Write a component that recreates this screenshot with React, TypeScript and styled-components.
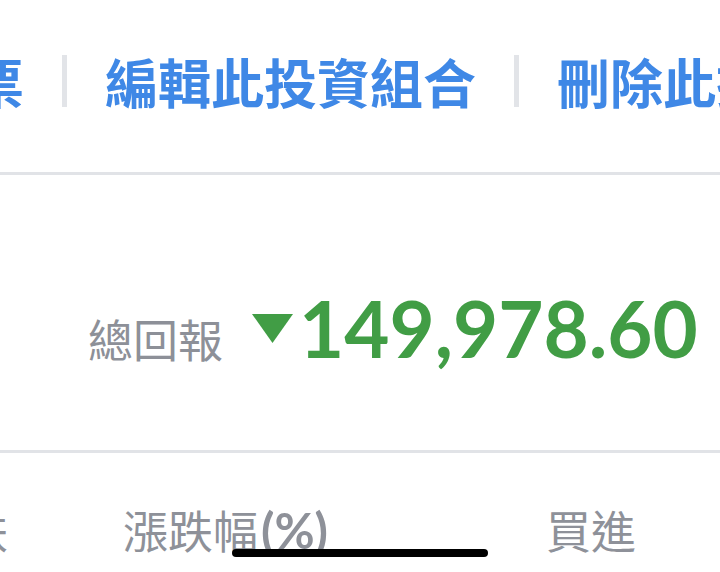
import React from "react";
import styled, { createGlobalStyle } from "styled-components";

const GlobalStyle = createGlobalStyle`
  html, body {
    margin: 0;
    padding: 0;
    background: #ffffff;
  }
  body {
    font-family: "Noto Sans CJK TC", "Noto Sans", sans-serif;
  }
`;

const Screen = styled.div`
  position: relative;
  width: 720px;
  height: 572px;
  overflow: hidden;
  background: #ffffff;
`;

const ActionBar = styled.div`
  box-sizing: border-box;
  height: 172px;
  padding-bottom: 10px;
  display: flex;
  align-items: center;
  gap: 38px;
  margin-left: -188px;
  white-space: nowrap;
`;

const ActionLink = styled.span`
  flex: none;
  font-family: "Noto Sans CJK TC", sans-serif;
  font-weight: 700;
  font-size: 53px;
  line-height: 53px;
  color: #3f88e6;
`;

const ActionSeparator = styled.span`
  flex: none;
  width: 5px;
  height: 52px;
  background: #e2e4e8;
`;

const Divider = styled.div`
  height: 3px;
  background: #e1e3e7;
`;

const Summary = styled.div`
  box-sizing: border-box;
  height: 275px;
  padding: 114px 0 0 88px;
  display: flex;
  align-items: baseline;
  white-space: nowrap;
`;

const SummaryLabel = styled.span`
  font-family: "Noto Sans CJK TC", sans-serif;
  font-weight: 400;
  font-size: 45px;
  line-height: 45px;
  color: #8d9098;
  margin-right: 29px;
`;

const Marker = styled.span`
  display: inline-block;
  width: 41px;
  height: 29px;
  padding-bottom: 15px;
  margin-right: 6px;
  svg {
    display: block;
  }
`;

const Amount = styled.span`
  font-family: Lato, "Liberation Sans", sans-serif;
  font-weight: 700;
  font-size: 78px;
  line-height: 78px;
  color: #419d45;
`;

const HeaderRow = styled.div`
  box-sizing: border-box;
  padding-top: 54px;
  margin-left: -82px;
  display: grid;
  grid-template-columns: 205px 423px 200px;
  white-space: nowrap;
`;

const HeaderCell = styled.span`
  font-family: "Noto Sans CJK TC", sans-serif;
  font-weight: 400;
  font-size: 45px;
  line-height: 45px;
  color: #8e9199;
`;

const Unit = styled.span`
  font-family: Lato, "Liberation Sans", sans-serif;
  font-weight: 700;
  font-size: 49px;
  margin-left: 3px;
`;

const HomeIndicator = styled.div`
  position: absolute;
  left: 232px;
  bottom: 15px;
  width: 256px;
  height: 8px;
  border-radius: 4px;
  background: #000000;
`;

export default function App() {
  return (
    <>
      <GlobalStyle />
      <Screen>
        <ActionBar>
          <ActionLink>新增股票</ActionLink>
          <ActionSeparator />
          <ActionLink>編輯此投資組合</ActionLink>
          <ActionSeparator />
          <ActionLink>刪除此投資組合</ActionLink>
        </ActionBar>
        <Divider />
        <Summary>
          <SummaryLabel>總回報</SummaryLabel>
          <Marker>
            <svg width="41" height="29" viewBox="0 0 41 29">
              <polygon points="0,0 41,0 20.5,29" fill="#419d45" />
            </svg>
          </Marker>
          <Amount>149,978.60</Amount>
        </Summary>
        <Divider />
        <HeaderRow>
          <HeaderCell>漲跌</HeaderCell>
          <HeaderCell>
            漲跌幅<Unit>(%)</Unit>
          </HeaderCell>
          <HeaderCell>買進</HeaderCell>
        </HeaderRow>
        <HomeIndicator />
      </Screen>
    </>
  );
}
